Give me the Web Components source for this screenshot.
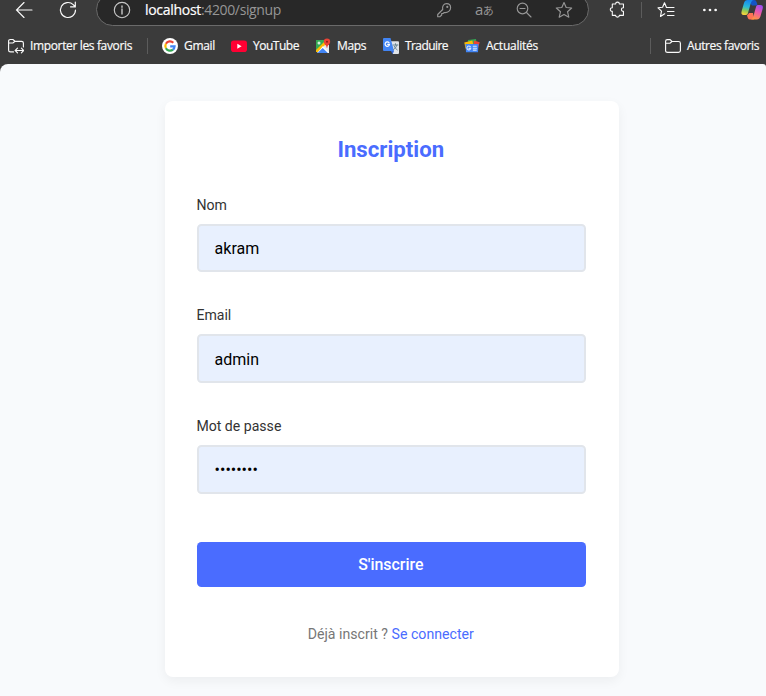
<!DOCTYPE html>
<html lang="fr">
<head>
<meta charset="utf-8">
<title>Inscription</title>
<style>
html,body{margin:0;height:100%;overflow:hidden;background:#3b3b3b}
body{font-family:Roboto,"Liberation Sans",sans-serif}
</style>
</head>
<body>
<signup-window></signup-window>
<script>
const glyphs = {
  back: '<svg viewBox="0 0 18 18"><path d="M9 1.500 1.500 9 9 16.500M1.500 9H17"/></svg>',
  reload: '<svg viewBox="0 0 18 18"><path d="M16.500 9a7.500 7.500 0 1 1-2.300-5.400L16 5.500M16.300 1v4.800h-4.800"/></svg>',
  info: '<svg viewBox="0 0 18 18"><circle cx="9" cy="9" r="7.700"/><path d="M9 8v5M9 5v1.300" stroke-width="1.400"/></svg>',
  key: '<svg viewBox="0 0 16 16"><path stroke-linejoin="round" d="M8.300 10.500 7 11.500H5.700V13L4 14.700H1.700v-2.200L6.700 7.500C6 4 7.800 1.700 10.600 1.700c2.300 0 4 1.700 4 4 0 3-2.700 5.200-6.300 4.800z"/><circle cx="11.300" cy="4.900" r=".5"/></svg>',
  zoom: '<svg viewBox="0 0 16 16"><circle cx="6.500" cy="6.500" r="5.300"/><path d="m10.500 10.500 4.500 4.500M4 6.500h5"/></svg>',
  star: '<svg viewBox="0 0 18 18"><path stroke-linejoin="round" d="m9 1.500 2.200 5 5.500.5-4.200 3.700 1.300 5.500L9 13.400l-4.800 2.800 1.300-5.500L1.300 7l5.500-.5z"/></svg>',
  puzzle: '<svg viewBox="0 0 18 18"><path stroke-linejoin="round" d="M3.500 3.200H7c0-2.700 4-2.700 4 0h4.300v3.900c-2.800-.2-2.800 4 0 3.800v4.300H11c0 2.500-4 2.500-4 0H3.500V11c-2.800.2-2.800-4.100 0-3.900z"/></svg>',
  favs: '<svg viewBox="0 0 18 18"><path stroke-linejoin="round" d="M7.700 12.800 3.500 15.400l1-5.300L1 6.800l4.600-.5L7.500 1.800l2 4.700"/><path d="M9.500 6.500H17M10.500 10.500H17M10.500 14.500H17"/></svg>',
  dots: '<svg viewBox="0 0 16 4"><g fill="currentColor" stroke="none"><circle cx="3" cy="2" r="1.200"/><circle cx="8" cy="2" r="1.200"/><circle cx="13" cy="2" r="1.200"/></g></svg>',
  folder: '<svg viewBox="0 0 16 16"><path d="M.600 13V3.300C.600 2 1.300 1.600 2.300 1.600H5L7 3.500h6.500c1.300 0 1.900.6 1.900 1.800V12.500c0 1.200-.7 1.900-1.900 1.900h-11C1.300 14.400.6 14 .6 13zM.6 5.200H5L7 3.500"/></svg>',
  import: '<svg viewBox="0 0 16 16"><path d="M5.500 13.900h-3C1.300 13.900.6 13.400.6 12.200V3.300C.6 2 1.300 1.500 2.300 1.500H5L7 3.300h6.500c1.300 0 1.900.6 1.900 1.800V9M.6 5H5L7 3.300M7.500 12.500h8M9.500 10.200l-2.300 2.300 2.300 2.300M13.400 10.200l2.300 2.300-2.300 2.300"/></svg>',
  google: '<svg viewBox="0 0 16 16" fill="none"><circle cx="8" cy="8" r="8" fill="#fff" stroke="none"/><g stroke-width="2.200" stroke-linecap="butt"><path stroke="#ea4335" d="M11.300 4.700A4.700 4.700 0 0 0 3.900 5.800"/><path stroke="#fbbc05" d="M3.900 5.800a4.700 4.700 0 0 0 0 4.400"/><path stroke="#34a853" d="M3.900 10.200a4.700 4.700 0 0 0 7.100 1.400"/><path stroke="#4285f4" d="M11 11.600A4.600 4.600 0 0 0 12.600 8.300H8.200"/></g></svg>',
  youtube: '<svg viewBox="0 0 16 16"><g stroke="none"><rect y="2.500" width="16" height="11.500" rx="2.800" fill="#f03"/><path fill="#fff" d="M6.300 5.800v5L10.600 8.300z"/></g></svg>',
  maps: '<svg viewBox="0 0 16 16"><g stroke="none"><path fill="#34a853" d="M1 2h11v6L1 14z"/><path fill="#e8eaed" d="M7 7h7v8H7z"/><path fill="#fbbc04" d="M1 12 10 3l2 2-9 9H1z"/><path fill="#fff" d="m2 15 6-7 6 7z"/><path fill="#4285f4" d="m2.500 15 5.200-5 5.200 5z"/><circle cx="4" cy="5" r="1.500" fill="#d6efdc"/><path fill="#ea4335" d="M12 .5a3.200 3.200 0 0 1 3.200 3.200C15.200 6 12.500 7 12.200 10h-.4C11.500 7 8.800 6 8.800 3.700A3.200 3.200 0 0 1 12 .500z"/><circle cx="12" cy="3.800" r="1" fill="#8c1d18"/></g></svg>',
  translate: '<svg viewBox="0 0 16 16"><g stroke="none"><path fill="#dfe3e8" d="M7 3.200h8q1 0 1 1V15q0 1-1 1H10z"/><path fill="#4285f4" d="M1 0h6.500l3.500 13H1q-1 0-1-1V1q0-1 1-1z"/><path fill="#3367d6" d="M7.800 13H11l-1.300 3z"/></g><path stroke="#fff" stroke-width="1.200" d="M6 4.700A2.200 2.200 0 1 0 6.500 6.300H4.700"/><path stroke="#607d8b" stroke-width=".9" d="M10 7h5M12.500 5.700V7M14 7q-.8 3-3.500 4.700M11.200 8.200q.8 2.300 3 3.700"/></svg>',
  news: '<svg viewBox="0 0 16 16"><g stroke="none"><path fill="#34a853" d="m4 2 8-1 1 7H4z"/><path fill="#fbbc04" d="m.3 4.500 8-2 2 8H1.500z"/><path fill="#ea4335" d="m10 2.500 5.700 1.700-2 7H9z"/><path fill="#4285f4" d="M1.500 6h13l-.5 8.200H2z"/></g><g stroke="#d8e6ff" stroke-width="1.100"><path d="M6.300 8.700a1.900 1.900 0 1 0 .4 1.700H5"/><path d="M9.300 8.300h3M9.300 10.300h3.300M9.300 12.100h3"/></g></svg>',
  copilot: `<svg viewBox="0 0 22 22"><defs><linearGradient id="a" x1=".5" y1="0" x2=".3" y2="1"><stop stop-color="#1687ef"/><stop offset=".45" stop-color="#29b9d8"/><stop offset=".72" stop-color="#8fcb55"/><stop offset="1" stop-color="#ffd43b"/></linearGradient><linearGradient id="b" x1=".7" y1="0" x2=".3" y2="1"><stop stop-color="#a04df2"/><stop offset=".5" stop-color="#ef5aa4"/><stop offset="1" stop-color="#ff963e"/></linearGradient></defs><g stroke="none"><path fill="#1554c5" d="M7 1h6c2 0 3 2 3.500 5.500H11z"/><path fill="url(#a)" d="M6.500 1H12c-1.700 1-2.200 3-3 6L7 14c-.5 1.500-1.300 2-2.700 2H2.800C.5 16 0 14.500.7 12L3 4c.6-2 1.700-3 3.500-3z"/><path fill="#ff7355" d="M6 16q1.500-.5 2-2h4l1 6.500H9c-2 0-2.500-2-3-4.500z"/><path fill="url(#b)" d="M17.500 6h1.800c2.300 0 3 1.500 2.300 4l-2.200 7.500c-.7 2-1.700 3-3.500 3H10c1.600-.8 2.300-3 3-5.500L15 8c.4-1.500 1.200-2 2.500-2z"/></g></svg>`
};

class UiIcon extends HTMLElement {
  connectedCallback() {
    const size = this.getAttribute('size') || 16;
    this.attachShadow({mode:'open'}).innerHTML = `<style>:host{display:block;flex:none;width:${size}px;height:${size}px}svg{display:block;width:100%;height:100%;fill:none;stroke:currentColor;stroke-width:1.15;stroke-linecap:round}</style>${glyphs[this.getAttribute('name')]}`;
  }
}
customElements.define('ui-icon', UiIcon);

/* Single line label whose tracking is adjusted to fill a given width. */
class FitText extends HTMLElement {
  connectedCallback() {
    this.attachShadow({mode:'open'}).innerHTML = '<style>:host{display:block;flex:none;white-space:pre}span{display:inline-block}</style><span><slot></slot></span>';
    const s = this.shadowRoot.querySelector('span'), w = +this.getAttribute('width');
    this.style.width = w + 'px';
    s.style.letterSpacing = (w - s.getBoundingClientRect().width) / this.textContent.length + 'px';
  }
}

class BarDivider extends HTMLElement {
  connectedCallback() {
    this.attachShadow({mode:'open'}).innerHTML = '<style>:host{display:block;flex:none;width:1px;height:16px;background:#5c5c5c}</style>';
  }
}
customElements.define('bar-divider', BarDivider);

class FavoriteLink extends HTMLElement {
  connectedCallback() {
    this.attachShadow({mode:'open'}).innerHTML = `<style>:host{display:flex;flex:none;align-items:center;gap:6px}</style><ui-icon name="${this.getAttribute('icon')}"></ui-icon><fit-text width="${this.getAttribute('width')}">${this.textContent}</fit-text>`;
  }
}

class BrowserChrome extends HTMLElement {
  connectedCallback() {
    this.attachShadow({mode:'open'}).innerHTML = `<style>
:host{display:block;height:64px;overflow:hidden;background:#3b3b3b;color:#fafafa;font:12px/16px "Open Sans","Noto Sans",sans-serif}
nav{display:flex;align-items:center;box-sizing:border-box;height:33px;margin-top:-7px;padding-left:15px}
.pill{display:flex;align-items:center;box-sizing:border-box;width:493px;height:33px;margin-left:19px;padding:0 15px 0 16px;border:1px solid #6a6a6a;border-radius:17px;background:#282828;color:#969696}
.pill ui-icon[name=info]{color:#c8c8c8}
.url{display:flex;margin-left:14px;font-size:14px;line-height:20px}.url b{font-weight:400;color:#fff;-webkit-text-stroke:.2px}
.tools{display:flex;align-items:center;gap:23px;margin-left:auto}
.lang{width:18px;font:15px/18px "Open Sans","Noto Sans CJK JP",sans-serif;letter-spacing:-.5px;white-space:nowrap}.lang small{font-size:11px;letter-spacing:0}
.favs{display:flex;align-items:center;height:36px;padding:2px 7px 0 8px;box-sizing:border-box;margin-top:1px;-webkit-text-stroke:.2px}
</style>
<nav><ui-icon name="back" size="18"></ui-icon><ui-icon name="reload" size="18" style="margin-left:26px"></ui-icon>
<div class="pill"><ui-icon name="info" size="18"></ui-icon><div class="url"><b><fit-text width="56">localhost</fit-text></b><fit-text width="80">:4200/signup</fit-text></div>
<div class="tools"><ui-icon name="key"></ui-icon><span class="lang">a<small>あ</small></span><ui-icon name="zoom"></ui-icon><ui-icon name="star" size="18"></ui-icon></div></div>
<ui-icon name="puzzle" size="17" style="margin-left:20px"></ui-icon><bar-divider style="margin-left:15px"></bar-divider><ui-icon name="favs" size="18" style="margin-left:15px"></ui-icon><ui-icon name="dots" size="18" style="margin-left:26px"></ui-icon><ui-icon name="copilot" size="22" style="margin-left:22px"></ui-icon></nav>
<div class="favs"><favorite-link icon="import" width="102">Importer les favoris</favorite-link><bar-divider style="margin:0 14px 0 15px"></bar-divider>
<favorite-link icon="google" width="31">Gmail</favorite-link><favorite-link icon="youtube" width="46" style="margin-left:16px">YouTube</favorite-link><favorite-link icon="maps" width="29" style="margin-left:16px">Maps</favorite-link><favorite-link icon="translate" width="43" style="margin-left:17px">Traduire</favorite-link><favorite-link icon="news" width="52" style="margin-left:16px">Actualités</favorite-link>
<bar-divider style="margin:0 14px 0 auto"></bar-divider><favorite-link icon="folder" width="72">Autres favoris</favorite-link></div>`;
  }
}

class FormField extends HTMLElement {
  connectedCallback() {
    this.attachShadow({mode:'open'}).innerHTML = `<style>
:host{display:block;height:110.700px}
label{display:block;box-sizing:border-box;height:28px;padding:0 0 0 .4px;font-size:14.100px;line-height:18px;color:#333}
div{display:flex;align-items:center;box-sizing:border-box;width:389.400px;height:48.500px;margin-left:.6px;padding:1px 16px 0;border:2px solid #e1e5eb;border-radius:4.500px;background:#e8f0fe;color:#000;font-size:16px}
</style><label>${this.getAttribute('label')}</label><div><slot></slot></div>`;
  }
}
customElements.define('form-field', FormField);

class SignupCard extends HTMLElement {
  connectedCallback() {
    this.attachShadow({mode:'open'}).innerHTML = `<style>
:host{display:block;box-sizing:border-box;width:454px;height:576px;padding:34px 32px 0 31.500px;border-radius:8px;background:#fff;box-shadow:0 4px 12px rgba(0,0,0,.05)}
h1{margin:0 1px 0 0;height:60.700px;font-size:22.200px;line-height:29px;text-align:center;color:#4a6cff}
button{display:block;width:389.600px;height:44.600px;margin:14.300px 0 0 .5px;padding:1px 1px 0 0;border:0;border-radius:4.500px;background:#4a6cff;color:#fff;font:500 15.900px/20px Roboto,sans-serif}
p{margin:37px 1px 0 0;text-align:center;font-size:14.150px;line-height:20px;color:#777}
a{color:#4a6cff}
</style><h1>Inscription</h1><form-field label="Nom">akram</form-field><form-field label="Email">admin</form-field><form-field label="Mot de passe">••••••••</form-field><button type="button">S'inscrire</button><p>Déjà inscrit ? <a>Se connecter</a></p>`;
  }
}
customElements.define('signup-card', SignupCard);

class SignupWindow extends HTMLElement {
  connectedCallback() {
    this.attachShadow({mode:'open'}).innerHTML = `<style>:host{display:block;width:766px}main{display:flex;justify-content:center;box-sizing:border-box;height:632px;padding:37px 0 0 17px;border-radius:8px 3px 0 0;background:#f8fafc}</style><browser-chrome></browser-chrome><main><signup-card></signup-card></main>`;
  }
}
customElements.define('fit-text', FitText);
customElements.define('favorite-link', FavoriteLink);
customElements.define('browser-chrome', BrowserChrome);
customElements.define('signup-window', SignupWindow);
</script>
</body>
</html>
